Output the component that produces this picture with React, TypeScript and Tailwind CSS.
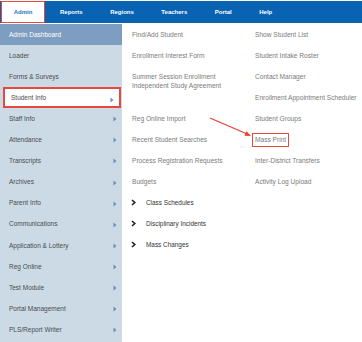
import React from "react";

const navItems = ["Reports", "Regions", "Teachers", "Portal", "Help"];

const sideItems: { label: string; arrow?: boolean; active?: boolean }[] = [
  { label: "Loader" },
  { label: "Forms & Surveys" },
  { label: "Student Info", arrow: true, active: true },
  { label: "Staff Info", arrow: true },
  { label: "Attendance", arrow: true },
  { label: "Transcripts", arrow: true },
  { label: "Archives", arrow: true },
  { label: "Parent Info", arrow: true },
  { label: "Communications", arrow: true },
  { label: "Application & Lottery", arrow: true },
  { label: "Reg Online", arrow: true },
  { label: "Test Module", arrow: true },
  { label: "Portal Management", arrow: true },
  { label: "PLS/Report Writer", arrow: true },
];

const colRight = [
  "Show Student List",
  "Student Intake Roster",
  "Contact Manager",
  "Enrollment Appointment Scheduler",
  "Student Groups",
  "Mass Print",
  "Inter-District Transfers",
  "Activity Log Upload",
];

const Caret = () => (
  <svg width="4" height="6" viewBox="0 0 4 6" className="absolute right-[5px] top-[8px]">
    <path d="M0.5 0.5 L3.5 3 L0.5 5.5 Z" fill="#6a8fbe" />
  </svg>
);

const Chevron = () => (
  <svg width="5" height="7" viewBox="0 0 5 7" className="mr-[10px]">
    <path d="M1 1 L3.8 3.5 L1 6" stroke="#222" strokeWidth="1.6" fill="none" />
  </svg>
);

const Link = ({ children, span }: { children: React.ReactNode; span?: boolean }) => (
  <div className={`${span ? "h-[42px]" : "h-[21px]"} pt-[6px] leading-[9px] text-[6.6px] text-[#7b7b7b]`}>
    {children}
  </div>
);

const Group = ({ label }: { label: string }) => (
  <div className="h-[21px] flex items-center -ml-[1px] text-[6.4px] text-[#333]">
    <Chevron />
    {label}
  </div>
);

export default function App() {
  return (
    <div
      className="relative w-[362px] h-[342px] overflow-hidden bg-white"
      style={{ fontFamily: '"Liberation Sans", Arial, sans-serif' }}
    >
      <nav className="mt-px h-[22px] bg-[#0a62b3] flex items-stretch">
        <div className="ml-px w-[44px] bg-white border-[1.5px] border-[#e5483c] flex items-center justify-center text-[6px] font-bold text-[#2a73c2]">
          Admin
        </div>
        <div className="flex items-center ml-[15px] gap-[27.5px] text-[6px] font-bold text-white">
          {navItems.map((n) => (
            <span key={n}>{n}</span>
          ))}
        </div>
      </nav>

      <div className="mt-px flex h-[318px]">
        <aside className="w-[122px] bg-[#ccdae6] flex flex-col">
          <div className="h-[21px] bg-[#7e9ec1] flex items-center pl-[9px] text-[6.5px] text-white">
            Admin Dashboard
          </div>
          {sideItems.map((s) => (
            <div
              key={s.label}
              className={`relative h-[21.1px] flex items-center text-[6.5px] text-[#4a4a4a] ${
                s.active ? "bg-white border-2 border-[#e5483c] ml-[3px] mr-[1px] pl-[6px]" : "pl-[9px]"
              }`}
            >
              {s.label}
              {s.arrow && <Caret />}
            </div>
          ))}
        </aside>

        <main className="flex-1 flex pl-[10px]">
          <div className="w-[123px] flex flex-col">
            <Link>Find/Add Student</Link>
            <Link>Enrollment Interest Form</Link>
            <Link span>
              Summer Session Enrollment
              <br />
              Independent Study Agreement
            </Link>
            <Link>Reg Online Import</Link>
            <Link>Recent Student Searches</Link>
            <Link>Process Registration Requests</Link>
            <Link>Budgets</Link>
            <Group label="Class Schedules" />
            <Group label="Disciplinary Incidents" />
            <Group label="Mass Changes" />
          </div>
          <div className="flex-1 flex flex-col">
            {colRight.map((c) =>
              c === "Mass Print" ? (
                <div key={c} className="h-[21px] flex items-center">
                  <span className="-ml-[3px] px-[2px] h-[14px] flex items-center border-[1.5px] border-[#e5483c] text-[6.6px] text-[#7b7b7b]">
                    {c}
                  </span>
                </div>
              ) : (
                <Link key={c}>{c}</Link>
              )
            )}
          </div>
        </main>
      </div>

      <svg className="absolute left-0 top-0 pointer-events-none" width="362" height="342">
        <line x1="210" y1="118" x2="246" y2="133.5" stroke="#e8402e" strokeWidth="1.2" />
        <path d="M251 136 L244.5 135.8 L246.5 131.2 Z" fill="#e8402e" />
      </svg>
    </div>
  );
}
